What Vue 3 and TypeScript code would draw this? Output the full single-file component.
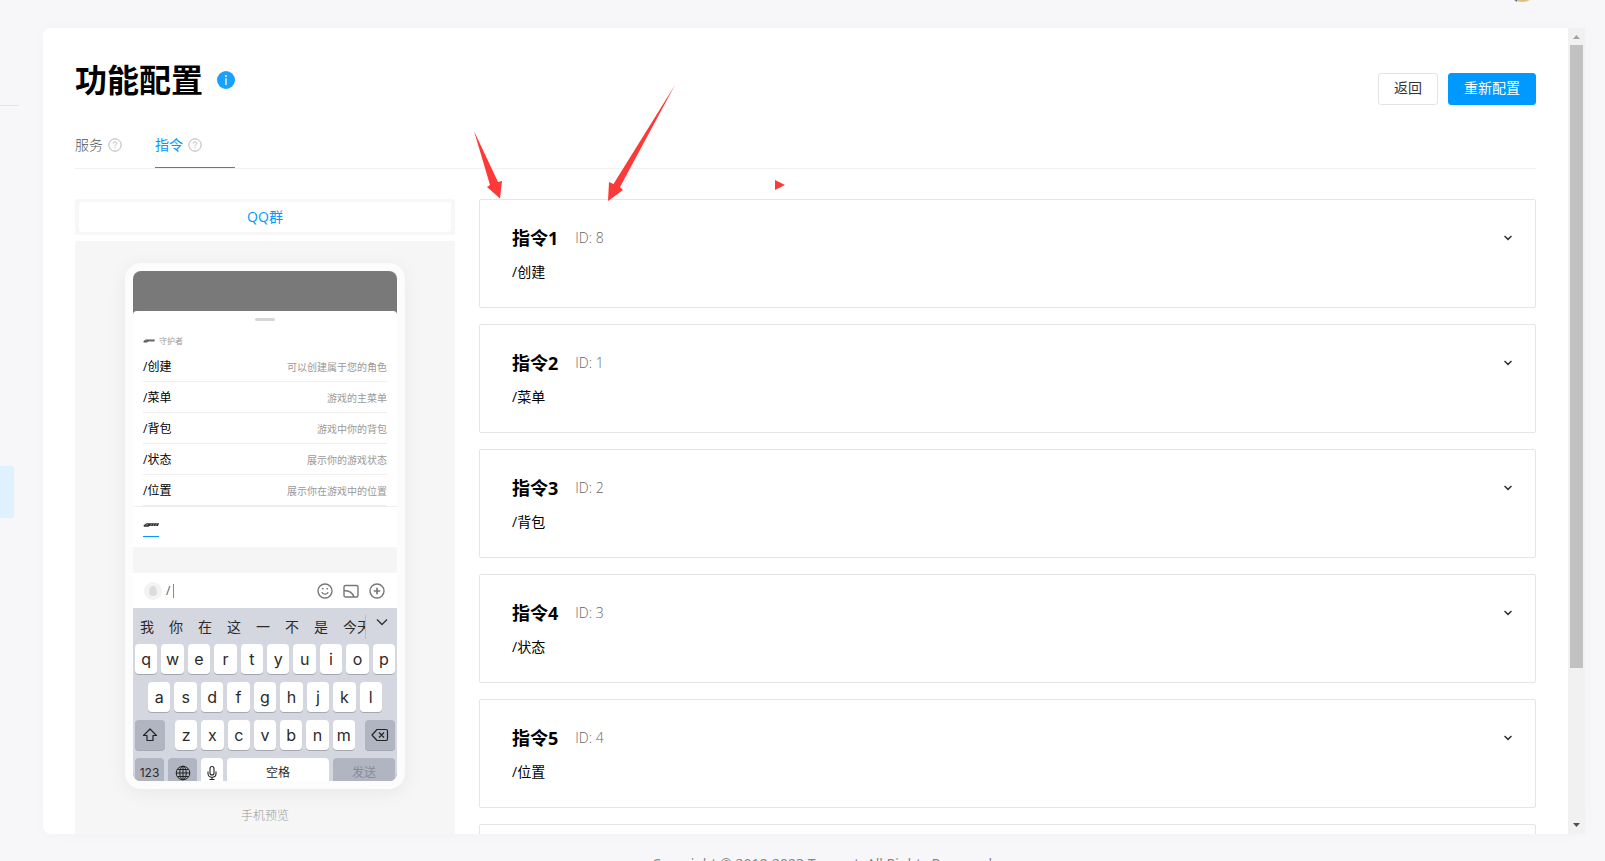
<script setup lang="ts">
import { ref } from 'vue'

interface Command {
  name: string
  id: number
  description: string
}

const commands: Command[] = [
  { name: '/创建', id: 8, description: '可以创建属于您的角色' },
  { name: '/菜单', id: 1, description: '游戏的主菜单' },
  { name: '/背包', id: 2, description: '游戏中你的背包' },
  { name: '/状态', id: 3, description: '展示你的游戏状态' },
  { name: '/位置', id: 4, description: '展示你在游戏中的位置' },
]

const tabs: string[] = ['服务', '指令']
const activeTab = ref<string>('指令')

const suggestions: string[] = ['我', '你', '在', '这', '一', '不', '是', '今天']
const topKeys: string[] = [...'qwertyuiop']
const middleKeys: string[] = [...'asdfghjkl']
const bottomKeys: string[] = [...'zxcvbnm']
</script>

<template>
  <div class="page">
    <header class="topbar">
      <svg class="avatar" width="32" height="32" viewBox="0 0 32 32" aria-hidden="true">
        <circle cx="16" cy="16" r="16" fill="#e3bf7c" />
        <path d="M4 27 L11 24 L11 32 Z" fill="#3f7fa0" />
      </svg>
    </header>

    <div class="body">
      <aside class="rail">
        <div class="rail-line"></div>
        <div class="rail-active"></div>
      </aside>

      <main class="panel">
        <div class="content">
          <div class="heading">
            <h1>功能配置</h1>
            <svg class="info" width="18" height="18" viewBox="0 0 18 18" aria-hidden="true">
              <circle cx="9" cy="9" r="9" fill="#1aa0ff" />
              <path d="M9 7.2V14" stroke="#fff" stroke-width="1.3" />
              <circle cx="9" cy="5" r="0.9" fill="#fff" />
            </svg>
            <div class="actions">
              <button type="button" class="btn">返回</button>
              <button type="button" class="btn primary">重新配置</button>
            </div>
          </div>

          <nav class="tabs">
            <button
              v-for="tab in tabs"
              :key="tab"
              type="button"
              class="tab"
              :class="{ active: tab === activeTab }"
              @click="activeTab = tab"
            >
              <span>{{ tab }}</span>
              <svg width="14" height="14" viewBox="0 0 14 14" fill="none" stroke="#b5b5b5" aria-hidden="true">
                <circle cx="7" cy="7" r="6.2" />
                <path d="M5.2 5.6C5.2 3.2 8.9 3.3 8.8 5.4C8.8 6.7 7 6.7 7 8.4M7 9.3V10.4" />
              </svg>
            </button>
          </nav>

          <div class="columns">
            <section class="preview">
              <div class="scene">
                <button type="button" class="scene-tab">QQ群</button>
              </div>
              <div class="stage">
                <div class="phone">
                  <div class="screen">
                    <div class="sheet">
                      <div class="handle"></div>
                      <div class="bot">
                        <svg width="12" height="4" viewBox="0 0 16 4" preserveAspectRatio="none" aria-hidden="true">
                          <path d="M3.500 .5H15.800L15 2.500H6.500L5.500 3.500H1L.500 2.200Z" fill="#555" />
                          <path d="M2.500 2.200L5 1.400M8.500 3L9.500 1M11.500 3L12.500 1" fill="none" stroke="#ccc" stroke-width=".6" />
                        </svg>
                        <span>守护者</span>
                      </div>
                      <ul class="list">
                        <li v-for="item in commands" :key="item.id">
                          <span class="list-name">{{ item.name }}</span>
                          <span class="list-desc">{{ item.description }}</span>
                        </li>
                      </ul>
                      <div class="bot-bar">
                        <div class="bot-tab">
                          <svg width="16" height="4" viewBox="0 0 16 4" aria-hidden="true">
                            <path d="M3.500 .3H16L15 3H6.500L5.500 3.700H1L.500 2.200Z" fill="#333" />
                            <path d="M2.500 2.300L5 1.400M7.500 3L8.500 1M10 3L11 1M12.500 3L13.500 1" fill="none" stroke="#bbb" stroke-width=".6" />
                          </svg>
                        </div>
                      </div>
                    </div>
                    <div class="gap"></div>
                    <div class="chat">
                      <svg width="18" height="18" viewBox="0 0 18 18" aria-hidden="true">
                        <circle cx="9" cy="9" r="9" fill="#f3f3f3" />
                        <path d="M9 4C6.400 4 5.400 6.500 5.400 9C5 11 5.200 12 6 13Q9 15 12 13C12.800 12 13 11 12.600 9C12.600 6.500 11.600 4 9 4Z" fill="#dcdcdc" />
                      </svg>
                      <span class="typed">/</span>
                      <span class="caret"></span>
                      <div class="chat-icons">
                        <svg width="16" height="16" viewBox="0 0 16 16" fill="none" stroke="#777" stroke-width="1.4" aria-hidden="true">
                          <circle cx="8" cy="8" r="7" />
                          <path d="M5 9C5.500 11.800 10.500 11.800 11 9" stroke-width="1.200" />
                          <path d="M5.800 5V6.600M10.200 5V6.600" />
                        </svg>
                        <svg width="16" height="16" viewBox="0 0 16 16" fill="none" stroke="#777" stroke-width="1.4" aria-hidden="true">
                          <rect x="1" y="2.500" width="14" height="11.500" rx="1.500" />
                          <path d="M1 7.500C5.500 7.500 9.500 9.500 11 14" />
                        </svg>
                        <svg width="16" height="16" viewBox="0 0 16 16" fill="none" stroke="#777" stroke-width="1.4" aria-hidden="true">
                          <circle cx="8" cy="8" r="7" />
                          <path d="M8 4.800V11.200M4.800 8H11.200" stroke-width="1.700" />
                        </svg>
                      </div>
                    </div>
                    <div class="keyboard">
                      <div class="suggest">
                        <div class="words">
                          <span v-for="word in suggestions" :key="word">{{ word }}</span>
                        </div>
                        <svg width="12" height="8" viewBox="0 0 12 8" fill="none" stroke="#333" stroke-width="1.4" aria-hidden="true">
                          <path d="M1 1.500L6 6.500L11 1.500" />
                        </svg>
                      </div>
                      <div class="keys">
                        <span v-for="key in topKeys" :key="key" class="key">{{ key }}</span>
                      </div>
                      <div class="keys inset">
                        <span v-for="key in middleKeys" :key="key" class="key">{{ key }}</span>
                      </div>
                      <div class="keys">
                        <span class="key dark side left">
                          <svg width="16" height="14" viewBox="0 0 16 14" fill="none" stroke="#222" stroke-width="1.200" stroke-linejoin="round" aria-hidden="true">
                            <path d="M8 1L14.500 7.500H11V12.500H5V7.500H1.500Z" />
                          </svg>
                        </span>
                        <span v-for="key in bottomKeys" :key="key" class="key">{{ key }}</span>
                        <span class="key dark side right">
                          <svg width="18" height="14" viewBox="0 0 18 14" fill="none" stroke="#222" stroke-width="1.200" stroke-linejoin="round" aria-hidden="true">
                            <path d="M1 7L6 1.500H15Q16.500 1.500 16.500 3V11Q16.500 12.500 15 12.500H6ZM8 4.500L13 9.500M13 4.500L8 9.500" />
                          </svg>
                        </span>
                      </div>
                      <div class="keys">
                        <span class="key dark num">123</span>
                        <span class="key dark num">
                          <svg width="16" height="16" viewBox="0 0 16 16" fill="none" stroke="#222" aria-hidden="true">
                            <circle cx="8" cy="8" r="6.800" />
                            <ellipse cx="8" cy="8" rx="3.200" ry="6.800" />
                            <path d="M8 1V15M1 8H15M2.500 4.500H13.500M2.500 11.500H13.500" />
                          </svg>
                        </span>
                        <span class="key mic">
                          <svg width="12" height="16" viewBox="0 0 12 16" fill="none" stroke="#222" stroke-width="1.100" aria-hidden="true">
                            <rect x="4" y="1.500" width="4" height="8.500" rx="2" />
                            <path d="M2 6.500V8.500C2 13.500 10 13.500 10 8.500V6.500M6 12.300V14.500M3.500 14.500H8.500" />
                          </svg>
                        </span>
                        <span class="key space">空格</span>
                        <span class="key dark send">发送</span>
                      </div>
                    </div>
                  </div>
                </div>
                <p class="caption">手机预览</p>
              </div>
            </section>

            <section class="cards">
              <article v-for="(item, index) in commands" :key="item.id" class="card">
                <div class="card-head">
                  <h2>指令{{ index + 1 }}</h2>
                  <span class="card-id">ID: {{ item.id }}</span>
                  <button type="button" class="toggle" :aria-label="'展开指令' + (index + 1)">
                    <svg width="8" height="6" viewBox="0 0 8 6" fill="none" stroke="#333" stroke-width="1.500" aria-hidden="true">
                      <path d="M0.500 1L4 4.400L7.500 1" />
                    </svg>
                  </button>
                </div>
                <p>{{ item.name }}</p>
              </article>
              <article class="card"></article>
            </section>
          </div>
        </div>

        <div class="scrollbar" aria-hidden="true">
          <svg width="17" height="17" viewBox="0 0 17 17"><path d="M5 11L8.500 7L12 11Z" fill="#a3a3a3" /></svg>
          <div class="track"><div class="thumb"></div></div>
          <svg width="17" height="17" viewBox="0 0 17 17"><path d="M5 6L8.500 10L12 6Z" fill="#505050" /></svg>
        </div>
      </main>
    </div>

    <footer class="footer">Copyright © 2018-2023 Tencent. All Rights Reserved.</footer>

    <svg class="marks" width="320" height="120" viewBox="470 83 320 120" fill="#ff3838" aria-hidden="true">
      <path d="M474 131L498 182L502 181L500 198.500L487 187L490 185Z" />
      <path d="M675 85L620 187L623 190L608 201L609 182L613.500 184Z" />
      <path d="M775 180L785 185L775 190Z" />
    </svg>
  </div>
</template>

<style>
body {
  margin: 0;
  background: #f7f7fa;
}
</style>

<style scoped>
* {
  box-sizing: border-box;
}

.page {
  position: relative;
  display: flex;
  flex-direction: column;
  height: 100vh;
  overflow: hidden;
  background: #f7f7fa;
  color: #000;
  font-family: "Open Sans", "Noto Sans CJK SC", sans-serif;
  font-size: 14px;
  line-height: 20px;
}

h1, h2, p, ul {
  margin: 0;
  padding: 0;
}

button {
  font: inherit;
  cursor: pointer;
}

svg {
  display: block;
  flex: none;
}

.topbar {
  display: flex;
  flex: none;
  justify-content: flex-end;
  align-items: flex-start;
  height: 28px;
  padding-right: 67px;
}

.avatar {
  margin-top: -30px;
}

.body {
  display: flex;
  flex: 1;
  min-height: 0;
  padding-right: 20px;
}

.rail {
  flex: none;
  width: 43px;
  padding-top: 77px;
}

.rail-line {
  width: 19px;
  height: 1px;
  background: #e4e4e7;
}

.rail-active {
  width: 14px;
  height: 52px;
  margin-top: 360px;
  border-radius: 0 3px 3px 0;
  background: #dff1ff;
}

.panel {
  display: flex;
  flex: 1;
  min-width: 0;
  overflow: hidden;
  border-radius: 8px 0 0 8px;
  background: #fff;
  box-shadow: 0 0 20px rgba(0, 0, 0, 0.02);
}

.content {
  flex: 1;
  min-width: 0;
  overflow: hidden;
  padding: 28px 32px 0;
}

.heading {
  display: flex;
  align-items: center;
  height: 48px;
}

h1 {
  font-size: 32px;
  font-weight: 700;
  line-height: 48px;
}

.info {
  margin-left: 14px;
}

.actions {
  display: flex;
  gap: 10px;
  margin-top: 18px;
  margin-left: auto;
}

.btn {
  height: 32px;
  padding: 0 15px 2px;
  border: 1px solid #e3e3e3;
  border-radius: 3px;
  background: #fff;
  color: #333;
}

.btn.primary {
  border-color: #0099ff;
  background: #0099ff;
  color: #fff;
}

.tabs {
  display: flex;
  height: 37px;
  margin-top: 28px;
  border-bottom: 1px solid #f1f1f1;
}

.tab {
  display: flex;
  gap: 5px;
  width: 80px;
  padding: 3px 0 0;
  border: 0;
  border-bottom: 1px solid transparent;
  background: none;
  color: #555;
  font-weight: 300;
}

.tab svg {
  margin-top: 3px;
}

.tab.active {
  border-color: #0a94f5;
  color: #0099ff;
  font-weight: 400;
}

.columns {
  display: flex;
  gap: 24px;
  margin-top: 30px;
}

.preview {
  flex: none;
  width: 380px;
}

.scene {
  height: 36px;
  padding: 3px 4px;
  border-radius: 2px;
  background: #f7f7f7;
}

.scene-tab {
  width: 100%;
  height: 30px;
  border: 0;
  border-radius: 4px;
  background: #fff;
  color: #0099ff;
}

.stage {
  margin-top: 6px;
  padding: 22px 50px 24px;
  border-radius: 2px;
  background: #f6f6f6;
}

.phone {
  padding: 8px;
  border-radius: 16px;
  background: #fcfcfc;
  box-shadow: 0 4px 20px rgba(0, 0, 0, 0.06);
}

.screen {
  height: 510px;
  overflow: hidden;
  padding-top: 40px;
  border-radius: 8px;
  background: #797979;
}

.sheet {
  height: 236px;
  border-radius: 4px 4px 0 0;
  background: #fff;
  padding-top: 7px;
}

.handle {
  width: 20px;
  height: 3px;
  margin: 0 auto;
  border-radius: 2px;
  background: #d6d6d6;
}

.bot {
  display: flex;
  align-items: center;
  gap: 4px;
  height: 16px;
  margin: 12px 10px 2px;
  color: #999;
  font-size: 8px;
}

.list {
  padding: 0 10px;
  list-style: none;
}

.list li {
  display: flex;
  align-items: center;
  justify-content: space-between;
  height: 31px;
  padding-top: 2px;
  border-bottom: 1px solid #eee;
}

.list-name {
  font-size: 12px;
}

.list-desc {
  color: #999;
  font-size: 10px;
}

.bot-bar {
  height: 41px;
  padding: 0 10px;
  border-top: 1px solid #eee;
}

.bot-tab {
  width: 16px;
  height: 30px;
  padding-top: 16px;
  border-bottom: 1px solid #0099ff;
}

.gap {
  height: 26px;
  background: #f5f5f5;
}

.chat {
  display: flex;
  align-items: center;
  height: 35px;
  padding: 0 12px 0 11px;
  background: #fff;
}

.typed {
  margin-left: 4px;
  color: #555;
  font-size: 12px;
}

.caret {
  width: 1px;
  height: 14px;
  margin-left: 3px;
  background: #2aa0ff;
}

.chat-icons {
  display: flex;
  gap: 10px;
  margin-left: auto;
}

.keyboard {
  display: flex;
  flex-direction: column;
  gap: 8px;
  padding: 0 2px;
  background: #d4d7df;
  color: #2a2a2a;
  font-family: Inter, "Noto Sans CJK SC", sans-serif;
}

.suggest {
  display: flex;
  align-items: center;
  gap: 10px;
  height: 28px;
}

.words {
  display: flex;
  flex: none;
  gap: 15px;
  width: 231px;
  height: 24px;
  margin-top: 10px;
  padding: 2px 0 0 5px;
  overflow: hidden;
  border-right: 1px solid #b9bcc4;
  font-size: 14px;
  white-space: nowrap;
}

.keys {
  display: flex;
  gap: 4px;
}

.keys.inset {
  padding: 0 13px;
}

.key {
  display: flex;
  flex: 1 1 0;
  align-items: center;
  justify-content: center;
  min-width: 0;
  height: 30px;
  border-radius: 4px;
  background: #fff;
  box-shadow: 0 1px 0 #a5a8b0;
  font-size: 16px;
}

.key.dark {
  background: #b0b5c1;
}

.key.side {
  flex: none;
  width: 30px;
}

.key.left {
  margin-right: 6px;
}

.key.right {
  margin-left: 6px;
}

.key.num {
  flex: none;
  width: 29px;
  font-size: 12px;
}

.key.mic {
  flex: none;
  width: 22px;
}

.key.space {
  font-size: 12px;
}

.key.send {
  flex: none;
  width: 62px;
  color: #858b98;
  font-size: 12px;
}

.caption {
  margin-top: 17px;
  color: #999;
  font-size: 12px;
  font-weight: 300;
  text-align: center;
}

.cards {
  display: flex;
  flex: 1;
  flex-direction: column;
  gap: 16px;
  min-width: 0;
}

.card {
  min-height: 109px;
  padding: 25px 22px 24px 32px;
  border: 1px solid #e5e5e5;
  border-radius: 2px;
}

.card-head {
  display: flex;
  align-items: center;
  height: 26px;
}

h2 {
  font-size: 18px;
  font-weight: 700;
  line-height: 26px;
}

.card-id {
  margin-left: 17px;
  color: #666;
  font-weight: 300;
}

.toggle {
  margin-left: auto;
  padding: 4px 1px;
  border: 0;
  background: none;
}

.card p {
  margin-top: 11px;
}

.scrollbar {
  display: flex;
  flex: none;
  flex-direction: column;
  width: 17px;
  background: #f1f1f1;
}

.track {
  flex: 1;
  padding: 0 2px;
}

.thumb {
  height: calc(81% - 2px);
  background: #c1c1c1;
}

.footer {
  flex: none;
  height: 27px;
  padding-top: 20px;
  padding-left: 43px;
  overflow: hidden;
  color: #888;
  font-family: "Noto Sans", sans-serif;
  text-align: center;
}

.marks {
  position: absolute;
  top: 83px;
  left: 470px;
  pointer-events: none;
}
</style>
